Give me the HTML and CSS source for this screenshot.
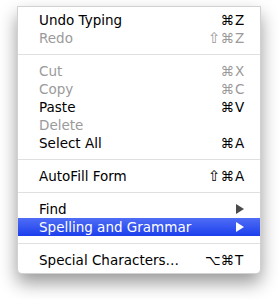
FILE: index.html
```html
<html><head><meta charset="UTF-8"><meta name="viewport" content="width=device-width, initial-scale=1.0"><title>Context Menu</title>
<link rel="stylesheet" href="styles.css">
</head>
<body>
<div class="menu">
    <div class="item"><span class="label">Undo Typing</span><span class="keys"><span class="mods">&#8984;</span><span class="key">Z</span></span></div>
    <div class="item disabled"><span class="label">Redo</span><span class="keys"><span class="mods"><span class="shift">&#8679;</span>&#8984;</span><span class="key">Z</span></span></div>
    <div class="separator"></div>
    <div class="item disabled"><span class="label">Cut</span><span class="keys"><span class="mods">&#8984;</span><span class="key">X</span></span></div>
    <div class="item disabled"><span class="label">Copy</span><span class="keys"><span class="mods">&#8984;</span><span class="key">C</span></span></div>
    <div class="item"><span class="label">Paste</span><span class="keys"><span class="mods">&#8984;</span><span class="key">V</span></span></div>
    <div class="item disabled"><span class="label">Delete</span></div>
    <div class="item"><span class="label">Select All</span><span class="keys"><span class="mods">&#8984;</span><span class="key">A</span></span></div>
    <div class="separator"></div>
    <div class="item"><span class="label">AutoFill Form</span><span class="keys"><span class="mods"><span class="shift">&#8679;</span>&#8984;</span><span class="key">A</span></span></div>
    <div class="separator"></div>
    <div class="item"><span class="label">Find</span><span class="arrow"></span></div>
    <div class="item selected"><span class="label">Spelling and Grammar</span><span class="arrow"></span></div>
    <div class="separator"></div>
    <div class="item"><span class="label">Special Characters&#8230;</span><span class="keys"><span class="mods">&#8997;&#8984;</span><span class="key">T</span></span></div>
</div>
</body></html>
```

FILE: styles.css
```css
body {
    margin: 0;
    padding: 6px 0 0 17px;
    background-color: #ffffff;
    font-family: 'DejaVu Sans', sans-serif;
    font-size: 13.5px;
}

.menu {
    width: 244px;
    box-sizing: border-box;
    padding: 4px 0;
    background-color: #ffffff;
    border: 1px solid rgba(0, 0, 0, 0.18);
    border-radius: 0 0 5px 5px;
    box-shadow: 0 9px 18px rgba(0, 0, 0, 0.4);
}

.item {
    display: flex;
    align-items: center;
    height: 18px;
    padding: 0 14px 0 21px;
    color: #000000;
}

.item .label {
    flex: 1;
}

.disabled {
    color: #9a9a9a;
}

.selected {
    background: linear-gradient(#4f6df6, #1c3fec);
    color: #ffffff;
}

.keys {
    display: flex;
}

.mods {
    text-align: right;
}

.shift {
    font-size: 15px;
    line-height: 1;
}

.key {
    width: 11px;
    padding-left: 1px;
}

.arrow {
    width: 0;
    height: 0;
    margin-right: 2px;
    border-top: 5px solid transparent;
    border-bottom: 5px solid transparent;
    border-left: 8px solid #4a4a4a;
}

.selected .arrow {
    border-left-color: #ffffff;
}

.separator {
    height: 1px;
    margin: 7px 0;
    background-color: #e0e0e0;
}
```
